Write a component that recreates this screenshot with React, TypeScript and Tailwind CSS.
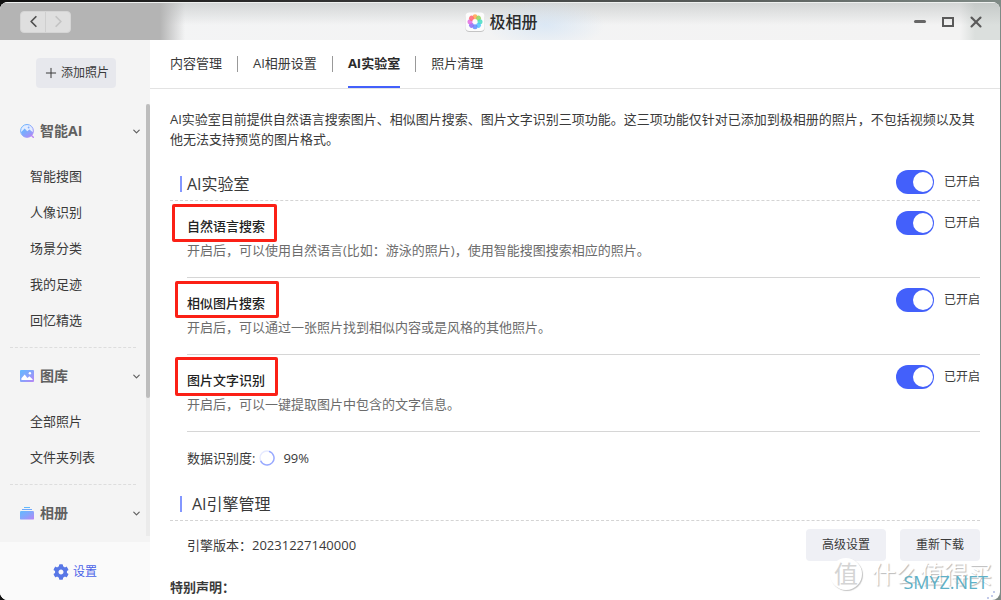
import { useState } from 'react'
import type { ReactNode } from 'react'
import { ChevronDown, ChevronLeft, ChevronRight, Plus, X } from 'lucide-react'
import { FaCog } from 'react-icons/fa'

const tabs = ['内容管理', 'AI相册设置', 'AI实验室', '照片清理']

const features = [
  {
    id: 'nlp',
    title: '自然语言搜索',
    desc: '开启后，可以使用自然语言(比如：游泳的照片)，使用智能搜图搜索相应的照片。',
    mark: '-left-[15px] -top-[10px] h-[38px] w-[105px]',
  },
  {
    id: 'similar',
    title: '相似图片搜索',
    desc: '开启后，可以通过一张照片找到相似内容或是风格的其他照片。',
    mark: '-left-3 -top-[10px] h-[37px] w-[104px]',
  },
  {
    id: 'ocr',
    title: '图片文字识别',
    desc: '开启后，可以一键提取图片中包含的文字信息。',
    mark: '-left-3 -top-[11px] h-[39px] w-[103px]',
  },
]

const groups = [
  { name: '智能AI', icon: <SmartIcon />, items: ['智能搜图', '人像识别', '场景分类', '我的足迹', '回忆精选'] },
  { name: '图库', icon: <GalleryIcon />, items: ['全部照片', '文件夹列表'] },
  { name: '相册', icon: <AlbumIcon />, items: [] },
]

function IconGradient({ id }: { id: string }) {
  return (
    <defs>
      <linearGradient id={id} x1="0" y1="0" x2="1" y2="1">
        <stop offset="0" stopColor="#62baff" />
        <stop offset="0.5" stopColor="#86a4fb" />
        <stop offset="1" stopColor="#b884f5" />
      </linearGradient>
    </defs>
  )
}

function SmartIcon() {
  return (
    <svg viewBox="0 0 14 14" className="size-3.5">
      <IconGradient id="g-smart" />
      <circle cx="7" cy="6.9" r="6.4" fill="#e3ecff" stroke="url(#g-smart)" strokeWidth="1" />
      <path d="M1 8.2 4.7 4.6l2.5 2.6 2.2-1.7 3.8 3A6.2 6.2 0 0 1 7 13.3 6.2 6.2 0 0 1 1 8.2Z" fill="url(#g-smart)" />
      <circle cx="8.6" cy="3.5" r="0.9" fill="#7fb0fd" />
      <path d="m11.2 11.2 2.1 2.1" stroke="#b884f5" strokeWidth="1.4" strokeLinecap="round" />
    </svg>
  )
}

function GalleryIcon() {
  return (
    <svg viewBox="0 0 14 14" className="size-3.5">
      <IconGradient id="g-gallery" />
      <rect y="1" width="14" height="12" rx="1" fill="url(#g-gallery)" />
      <path d="M1.4 11V9.2l3.3-3.7L7.4 9l2-1.7 3.2 3V11Z" fill="#fff" />
      <circle cx="9.9" cy="4.3" r="1.2" fill="#fff" />
    </svg>
  )
}

function AlbumIcon() {
  return (
    <svg viewBox="0 0 14 14" className="size-3.5">
      <IconGradient id="g-album" />
      <path d="M4 1.5h6" stroke="#62b8fb" />
      <path d="M2 3.5h10" stroke="#6fa8fb" />
      <rect y="5" width="14" height="8.6" rx="1.2" fill="url(#g-album)" />
    </svg>
  )
}

function Logo() {
  const petals = ['#ffa64d', '#8fd65c', '#45dcc0', '#4cc3fb', '#5f8dfb', '#8c6cf5', '#e06be0', '#ff6474']
  return (
    <svg viewBox="0 0 20 20" className="size-5">
      <rect x="0.5" y="1.4" width="19" height="18.6" rx="4" fill="#c4c4c4" />
      <rect x="0.5" y="0.5" width="19" height="18.6" rx="4" fill="#fcfcfc" />
      {petals.map((color, i) => (
        <circle key={color} cx="10" cy="4.8" r="2.5" fill={color} opacity="0.85" transform={`rotate(${i * 45} 10 9.8)`} />
      ))}
    </svg>
  )
}

function TitleBar() {
  return (
    <header className="grid h-[38px] shrink-0 grid-cols-3 items-center border-t border-[#eef0ef] bg-[radial-gradient(ellipse_60px_24px_at_545px_22px,rgba(200,222,245,0.55),transparent),linear-gradient(to_right,#b4b4b4_160px,rgba(180,180,180,0)_185px),linear-gradient(to_bottom,rgba(165,170,170,0.4),rgba(240,240,240,0)_60%),linear-gradient(to_right,#f3f4f5,#f3f3f3_calc(100%-40px),#dbdfdd_calc(100%-25px))] pr-[17px] pl-5">
      <div className="flex h-[22px] w-[51px] overflow-hidden rounded border border-[#d5d5d5] bg-[#dfdfdf]">
        <button aria-label="后退" className="flex flex-1 items-center justify-center border-r border-[#cfcfcf] text-[#505050]">
          <ChevronLeft size={19} strokeWidth={2.2} />
        </button>
        <button aria-label="前进" className="flex flex-1 items-center justify-center text-[#c4c4c4]">
          <ChevronRight size={19} strokeWidth={2.2} />
        </button>
      </div>
      <div className="flex items-center justify-center gap-1">
        <Logo />
        <h1 className="text-base leading-6 font-medium text-[#2c2c2c]">极相册</h1>
      </div>
      <div className="flex items-center justify-end gap-3.5">
        <button aria-label="最小化" className="flex size-3.5 items-center justify-center">
          <span className="h-[3px] w-3 rounded-full bg-[#666]" />
        </button>
        <button aria-label="最大化" className="flex size-3.5 items-center justify-center">
          <span className="h-2.5 w-3 border-2 border-[#5a5a5a]" />
        </button>
        <button aria-label="关闭" className="flex size-3.5 items-center justify-center text-[#5a5a5a]">
          <X size={18} strokeWidth={2.8} className="shrink-0" />
        </button>
      </div>
    </header>
  )
}

function Sidebar() {
  return (
    <aside className="flex w-[150px] shrink-0 flex-col bg-[#f4f4f4]">
      <div className="flex shrink-0 justify-center pt-[18px] pb-4 pl-0.5">
        <button className="flex h-[30px] w-20 items-center justify-center gap-0.5 rounded bg-[#e7e8ed] text-xs text-[#3a3a3a]">
          <Plus size={16} strokeWidth={1.5} />
          添加照片
        </button>
      </div>
      <div className="flex min-h-0 flex-1 pb-1.5">
        <nav className="min-w-0 flex-1 overflow-hidden">
          {groups.map((group) => (
            <section key={group.name} className="group">
              <button className="flex h-[54px] w-full items-center gap-1.5 pr-1 pl-5 text-left text-sm font-bold text-[#606060]">
                {group.icon}
                <span className="flex-1">{group.name}</span>
                <ChevronDown size={11} strokeWidth={2.6} />
              </button>
              <ul className="mx-2.5 mb-px border-b border-dashed border-[#ddd] pb-[9px] group-last:border-0">
                {group.items.map((item) => (
                  <li key={item}>
                    <a href="#" className="block pl-5 text-[13px] leading-9 text-[#3a3a3a]">{item}</a>
                  </li>
                ))}
              </ul>
            </section>
          ))}
        </nav>
        <div className="w-1 bg-[#ebebeb]">
          <div className="h-[68%] rounded-full bg-[#bdbdbd]" />
        </div>
      </div>
      <button className="flex h-[58px] shrink-0 items-center justify-center gap-1 bg-[#fafafa] pt-0.5 text-xs text-[#4a63e8]">
        <FaCog size={16} className="text-[#5877e6]" />
        设置
      </button>
    </aside>
  )
}

function Toggle({ id, label }: { id: string; label: string }) {
  const [on, setOn] = useState(true)

  return (
    <div className="flex shrink-0 items-center gap-2.5">
      <input
        id={id}
        type="checkbox"
        aria-label={label}
        checked={on}
        onChange={(e) => setOn(e.target.checked)}
        className="h-6 w-[38px] appearance-none rounded-full bg-[#c4c7d0] px-px py-0.5 before:block before:size-5 before:rounded-full before:bg-white checked:bg-[#4360fb] checked:before:ml-auto"
      />
      <label htmlFor={id} className="text-xs leading-6 text-[#3a3a3a]">{on ? '已开启' : '已关闭'}</label>
    </div>
  )
}

function SectionTitle({ title, wide, children }: { title: string; wide?: boolean; children?: ReactNode }) {
  return (
    <div className="flex h-[34px] items-center border-b border-dashed border-[#d4d4d4] pl-2.5">
      <span className="h-4 w-0.5 bg-[#8397ff]" />
      <h2 className={`flex-1 text-base text-[#3a3a3a] ${wide ? 'pl-2.5' : 'pl-[5px]'}`}>{title}</h2>
      {children}
    </div>
  )
}

function Watermark() {
  return (
    <div className="pointer-events-none absolute right-2 bottom-2.5 flex items-center gap-2.5">
      <span className="flex size-8 items-center justify-center rounded-full border-2 border-white bg-white text-2xl leading-6 text-[#d4d4d4] shadow-[1px_1px_1px_#c4c4c4]">
        值
      </span>
      <span className="text-2xl leading-8 text-white [text-shadow:1px_1px_1px_#bbb]">什么值得买</span>
      <span className="absolute right-1 -bottom-1 text-lg leading-6 text-[#5fb0c6]">SMYZ.NET</span>
    </div>
  )
}

export default function App() {
  const [active, setActive] = useState('AI实验室')

  return (
    <div className="h-screen bg-[linear-gradient(to_right,#111,#333_35%,#5b605e_75%,#7f8a86)] pt-0.5 pr-px font-['Open_Sans','Noto_Sans_CJK_SC',sans-serif]">
      <div className="relative flex h-full flex-col overflow-hidden rounded-lg bg-white">
        <TitleBar />
        <div className="flex min-h-0 flex-1">
          <Sidebar />
          <main className="min-w-0 flex-1 overflow-hidden text-[13px] leading-5 text-[#3a3a3a]">
            <nav className="flex h-[49px] items-center border-b border-[#e3e3e3] px-5">
              {tabs.map((tab, i) => (
                <div key={tab} className="flex h-full items-center">
                  {i > 0 && <span className="mx-[15px] h-4 w-px bg-[#999]" />}
                  <button
                    onClick={() => setActive(tab)}
                    className={`h-full border-b-2 pb-px ${active === tab ? 'border-[#4360fb] font-bold text-[#2a2a2a]' : 'border-transparent'}`}
                  >
                    {tab}
                  </button>
                </div>
              ))}
            </nav>
            <div className="px-5 pt-5">
              <p className="mb-[18px]">
                AI实验室目前提供自然语言搜索图片、相似图片搜索、图片文字识别三项功能。这三项功能仅针对已添加到极相册的照片，不包括视频以及其他无法支持预览的图片格式。
              </p>

              <SectionTitle title="AI实验室">
                <div className="pb-1">
                  <Toggle id="lab" label="AI实验室" />
                </div>
              </SectionTitle>
              <div className="pl-[17px]">
                {features.map((f) => (
                  <div key={f.id} className="flex items-start justify-between border-b border-[#d6d6d6] pt-2.5 pb-[15px]">
                    <div className="pt-[3px] leading-6">
                      <div className="relative w-fit">
                        <h3 className="font-medium text-[#222]">{f.title}</h3>
                        <span className={`absolute rounded-xs border-[3px] border-[#fb2016] ${f.mark}`} />
                      </div>
                      <p className="text-[#6c6c6c]">{f.desc}</p>
                    </div>
                    <Toggle id={f.id} label={f.title} />
                  </div>
                ))}
                <div className="mb-[3px] flex h-[52px] items-center">
                  <span>数据识别度:</span>
                  <svg viewBox="0 0 16 16" className="mr-2 ml-1 size-4" fill="none" strokeWidth="1.4">
                    <circle cx="8" cy="8" r="7" stroke="#e6eaff" />
                    <path d="M10 1.3A7 7 0 1 1 1.6 10.8" stroke="#98a9ff" />
                  </svg>
                  <span>99%</span>
                </div>
              </div>

              <SectionTitle title="AI引擎管理" wide />
              <div className="flex items-center justify-between pt-2 pl-[17px]">
                <span>引擎版本：20231227140000</span>
                <div className="flex gap-3.5 text-xs">
                  <button className="h-8 w-20 rounded bg-[#eff0f5]">高级设置</button>
                  <button className="h-8 w-20 rounded bg-[#eff0f5]">重新下载</button>
                </div>
              </div>
              <h3 className="mt-4 font-bold">特别声明：</h3>
            </div>
          </main>
        </div>
        <Watermark />
        <svg viewBox="0 0 10 10" className="absolute right-1 bottom-0 size-2.5 fill-[#c3cbea]">
          <path d="M7 1h2v2H7zM5 5h2v2H5zM1 7h2v2H1z" />
        </svg>
      </div>
    </div>
  )
}
